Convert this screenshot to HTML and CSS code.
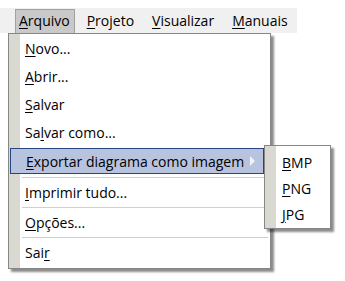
FILE: index.html
```html
<!DOCTYPE html>
<html lang="pt">
<head>
  <meta charset="UTF-8">
  <title>Menu</title>
  <link rel="stylesheet" href="styles.css">
</head>
<body>
  <div class="menubar">
    <span class="top open"><u>A</u>rquivo</span>
    <span class="top"><u>P</u>rojeto</span>
    <span class="top"><u>V</u>isualizar</span>
    <span class="top"><u>M</u>anuais</span>
  </div>

  <div class="menu main">
    <div class="item first"><u>N</u>ovo...</div>
    <div class="item"><u>A</u>brir...</div>
    <div class="item"><u>S</u>alvar</div>
    <div class="item">Sa<u>l</u>var como...</div>
    <div class="item hot"><span><u>E</u>xportar diagrama como imagem</span><span class="arrow"></span></div>
    <div class="sep"></div>
    <div class="item"><u>I</u>mprimir tudo...</div>
    <div class="sep"></div>
    <div class="item"><u>O</u>pções...</div>
    <div class="sep"></div>
    <div class="item">Sai<u>r</u></div>
  </div>

  <div class="menu sub">
    <div class="item"><u>B</u>MP</div>
    <div class="item"><u>P</u>NG</div>
    <div class="item"><u>J</u>PG</div>
  </div>
</body>
</html>
```
FILE: styles.css
```css
body {
  margin: 0;
  padding-top: 8px;
  background: #fff;
  font-family: 'Open Sans', 'Noto Sans', sans-serif;
  font-size: 14px;
  color: #000;
}
u {
  text-decoration-thickness: 1px;
  text-underline-offset: 2px;
}
.menubar {
  display: flex;
  width: 297px;
  height: 25px;
  padding-left: 15px;
  box-sizing: border-box;
  background: #f0f0f0;
  align-items: flex-end;
}
.top {
  height: 23px;
  line-height: 22px;
  padding: 0 5px 0 3px;
  margin-right: 8px;
  border: 1px solid transparent;
  border-bottom: none;
}
.top.open {
  background: #c9c9c9;
  border-color: #a0a0a0;
  padding-right: 4px;
}
.menu {
  position: absolute;
  background: #fff;
  border: 1px solid #868686;
  box-shadow: 3px 3px 2px rgba(0, 0, 0, 0.45);
  background-image: linear-gradient(to right, #d9d9d2 0, #d9d9d2 11px, #fff 11px);
}
.main {
  left: 8px;
  top: 33px;
  width: 261px;
  height: 234px;
}
.sub {
  left: 264px;
  top: 145px;
  width: 67px;
  height: 84px;
  padding-top: 3px;
  box-sizing: border-box;
}
.item {
  display: flex;
  align-items: center;
  height: 28px;
  padding-left: 16px;
  box-sizing: border-box;
}
.sub .item {
  height: 26px;
  padding-left: 17px;
}
.hot {
  height: 26px;
  margin: 2px 6px 3px 1px;
  padding-left: 15px;
  padding-right: 8px;
  justify-content: space-between;
  background: #b7c3df;
  border: 1px solid #27457e;
}
.arrow {
  width: 0;
  height: 0;
  border-left: 5px solid #f4f4f4;
  border-top: 5px solid transparent;
  border-bottom: 5px solid transparent;
}
.sep {
  height: 1px;
  margin-left: 13px;
  margin-right: 2px;
  background: #cfcfcf;
}
.sep + .item {
  height: 29px;
}
```
